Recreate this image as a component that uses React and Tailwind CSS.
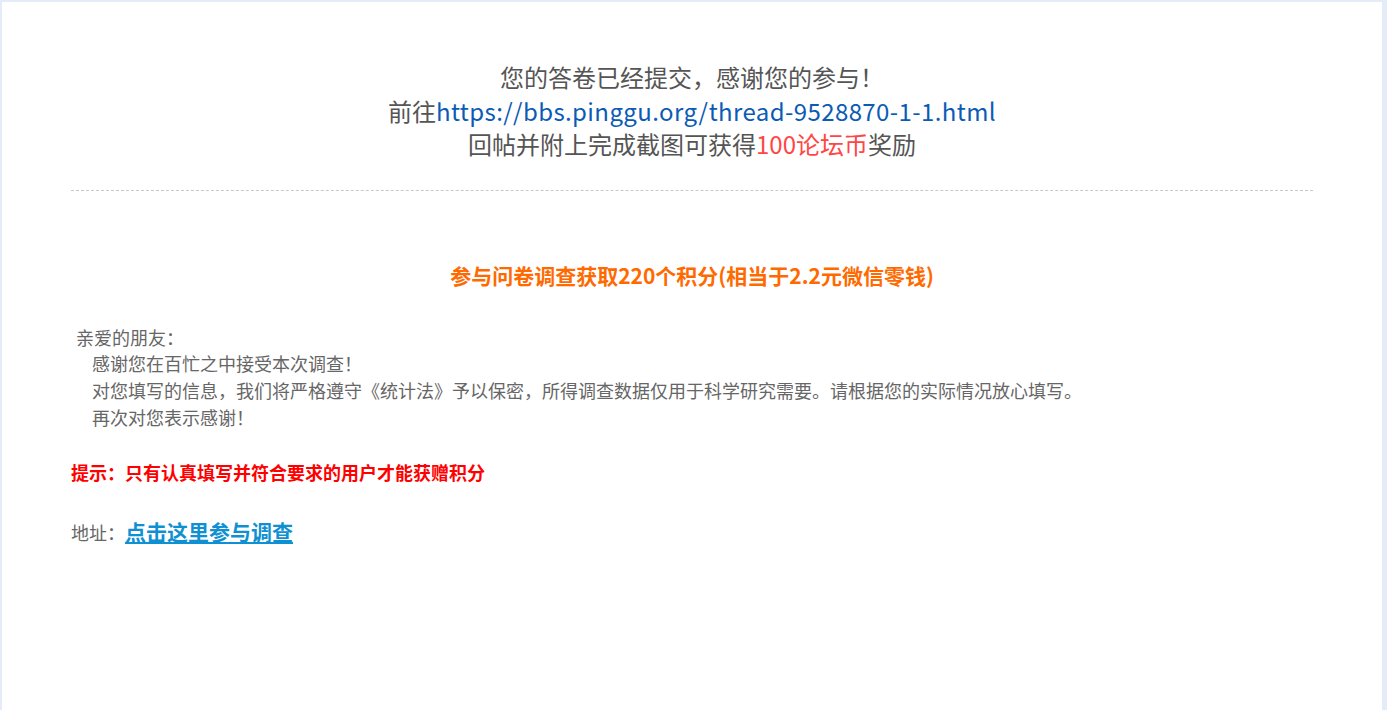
import React from 'react';

const SurveyComplete = () => {
  const font = { fontFamily: '"Microsoft YaHei", "Noto Sans CJK SC", "Noto Sans", sans-serif' };

  return (
    <div className="min-h-screen bg-[#e4ecf8] pt-[2px] pl-[2px] pr-[5px] overflow-hidden" style={font}>
      <div className="bg-white min-h-[720px] px-[69px] pt-[58px] text-[#555]">
        {/* 提交结果 */}
        <div className="text-center text-[24px] leading-[33.5px] text-[#555]">
          <p>您的答卷已经提交，感谢您的参与！</p>
          <p>
            前往<a href="#" className="text-[#0b5bb5] tracking-[0.4px]">https://bbs.pinggu.org/thread-9528870-1-1.html</a>
          </p>
          <p>
            回帖并附上完成截图可获得<span className="text-[#ff4646]">100论坛币</span>奖励
          </p>
        </div>

        <div className="mt-[29px] border-t border-dashed border-[#c8c8c8]" />

        {/* 问卷说明 */}
        <h3 className="mt-[70px] text-center text-[21px] leading-[28px] font-bold text-[#ff6a00]">
          参与问卷调查获取220个积分(相当于2.2元微信零钱)
        </h3>

        <div className="mt-[35px] text-[18px] leading-[26.7px] text-[#666]">
          <p className="pl-[5px]">亲爱的朋友：</p>
          <p className="pl-[21px]">感谢您在百忙之中接受本次调查！</p>
          <p className="pl-[21px]">
            对您填写的信息，我们将严格遵守《统计法》予以保密，所得调查数据仅用于科学研究需要。请根据您的实际情况放心填写。
          </p>
          <p className="pl-[21px]">再次对您表示感谢！</p>
        </div>

        <p className="mt-[29px] text-[18px] leading-[26.7px] font-bold text-[#ff0000]">
          提示：只有认真填写并符合要求的用户才能获赠积分
        </p>

        <p className="mt-[30px] text-[18px] leading-[30px] text-[#666]">
          地址：
          <a href="#" className="text-[21px] font-bold text-[#0e90d2] underline">
            点击这里参与调查
          </a>
        </p>
      </div>
    </div>
  );
};

export default SurveyComplete;
